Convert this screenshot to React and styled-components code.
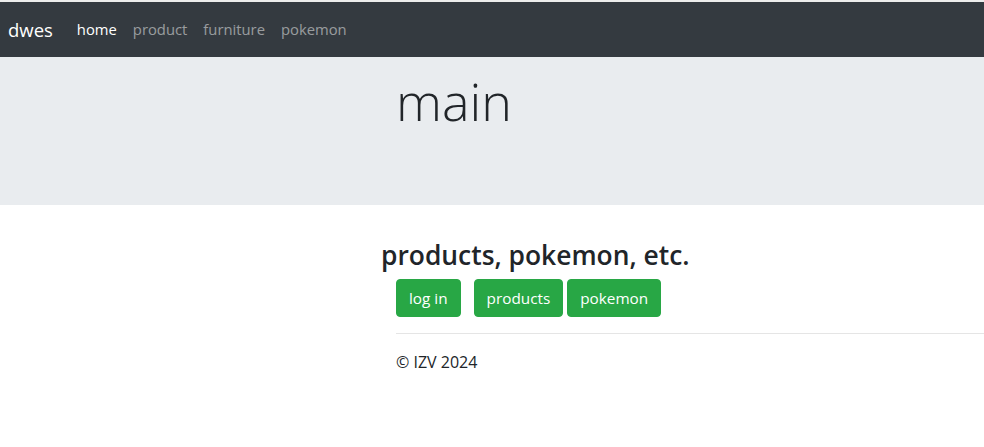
import React from 'react'
import styled, { createGlobalStyle } from 'styled-components';

const GlobalStyle = createGlobalStyle`
  html, body {
    margin: 0;
    padding: 0;
    background: #fff;
  }
  body {
    font-family: "Open Sans", "Noto Sans", Arial, sans-serif;
    font-size: 16px;
    line-height: 1.5;
    color: #212529;
    border-top: 2px solid #ececec;
  }
`;

const links = [
  { label: 'home', active: true },
  { label: 'product' },
  { label: 'furniture' },
  { label: 'pokemon' },
];

export default function App() {
  return (
    <>
      <GlobalStyle />
      <Navbar>
        <Brand href="#">dwes</Brand>
        <NavList>
          {links.map((l) => (
            <NavLink key={l.label} href="#" $active={l.active}>{l.label}</NavLink>
          ))}
        </NavList>
      </Navbar>
      <Jumbotron>
        <Display>main</Display>
      </Jumbotron>
      <Main>
        <Heading>products, pokemon, etc.</Heading>
        <Inner>
          <ButtonRow>
            <GreenButton>log in</GreenButton>
            <Group>
              <GreenButton>products</GreenButton>
              <GreenButton>pokemon</GreenButton>
            </Group>
          </ButtonRow>
          <Rule />
          <Footer>© IZV 2024</Footer>
        </Inner>
      </Main>
    </>
  );
}

const Navbar = styled.nav`
  display: flex;
  align-items: center;
  height: 55px;
  padding: 0 8px;
  background: #343a40;
`;

const Brand = styled.a`
  font-size: 18.5px;
  color: #fff;
  text-decoration: none;
  margin-right: 16px;
`;

const NavList = styled.div`
  display: flex;
  align-items: center;
`;

const NavLink = styled.a`
  padding: 0 8px;
  font-size: 14.8px;
  text-decoration: none;
  color: ${(p) => (p.$active ? '#fff' : 'rgba(255,255,255,.5)')};
`;

const Jumbotron = styled.header`
  height: 148px;
  box-sizing: border-box;
  padding: 13px 0 0 396px;
  background: #e9ecef;
`;

const Display = styled.h1`
  margin: 0;
  font-size: 52px;
  font-weight: 300;
  line-height: 1.2;
`;

const Main = styled.main`
  padding: 35px 0 0 381px;
  overflow: hidden;
`;

const Heading = styled.h3`
  margin: 0 0 7px;
  font-size: 26.4px;
  font-weight: 600;
  line-height: 1.2;
`;

const Inner = styled.div`
  padding-left: 15px;
`;

const ButtonRow = styled.div`
  display: flex;
  gap: 13px;
`;

const Group = styled.div`
  display: flex;
  gap: 4px;
`;

const GreenButton = styled.button`
  height: 38px;
  padding: 0 12px;
  border: 1px solid #28a745;
  border-radius: 4px;
  background: #28a745;
  color: #fff;
  font-family: inherit;
  font-size: 15.3px;
  cursor: pointer;
`;

const Rule = styled.hr`
  margin: 16px -200px 16px 0;
  border: 0;
  border-top: 1px solid rgba(0, 0, 0, .1);
`;

const Footer = styled.p`
  margin: 0;
  font-size: 16px;
`;
